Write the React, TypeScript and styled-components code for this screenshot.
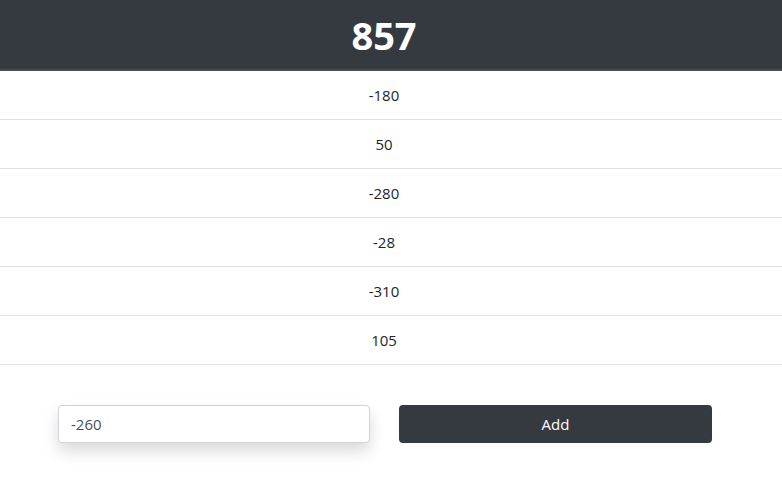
import React from "react";
import styled, { createGlobalStyle } from "styled-components";

const Global = createGlobalStyle`
  html, body { margin: 0; padding: 0; background: #fff; }
  body { font-family: "Open Sans", "Noto Sans", sans-serif; color: #212529; }
  * { box-sizing: border-box; }
`;

const Page = styled.div`
  width: 782px;
  height: 483px;
  background: #fff;
  overflow: hidden;
`;

const Header = styled.header`
  height: 71px;
  background: #343a40;
  border-bottom: 2px solid #454d55;
  color: #fff;
  display: flex;
  align-items: center;
  justify-content: center;
  padding-right: 14px;
  font-size: 38px;
  font-weight: 700;
  line-height: 1;
`;

const List = styled.div`
  display: flex;
  flex-direction: column;
`;

const Row = styled.div`
  height: 49px;
  border-bottom: 1px solid #dee2e6;
  display: flex;
  align-items: center;
  justify-content: center;
  padding-right: 14px;
  font-size: 15px;
  color: #212529;
`;

const Form = styled.form`
  display: grid;
  grid-template-columns: 312px 313px;
  column-gap: 29px;
  padding: 40px 0 0 58px;
`;

const Input = styled.input`
  height: 38px;
  border: 1px solid #ced4da;
  border-radius: 4px;
  padding: 0 12px;
  font-family: "Open Sans", "Noto Sans", sans-serif;
  font-size: 15px;
  color: #495057;
  background: #fff;
  box-shadow: 0 8px 16px rgba(0, 0, 0, 0.15);
  outline: none;
`;

const Button = styled.button`
  height: 38px;
  border: none;
  border-radius: 4px;
  background: #343a40;
  color: #fff;
  font-family: "Open Sans", "Noto Sans", sans-serif;
  font-size: 15px;
  cursor: pointer;
`;

const values = [-180, 50, -280, -28, -310, 105];

export default function App() {
  return (
    <Page>
      <Global />
      <Header>857</Header>
      <List>
        {values.map((v, i) => (
          <Row key={i}>{v}</Row>
        ))}
      </List>
      <Form onSubmit={(e) => e.preventDefault()}>
        <Input defaultValue="-260" />
        <Button type="submit">Add</Button>
      </Form>
    </Page>
  );
}
